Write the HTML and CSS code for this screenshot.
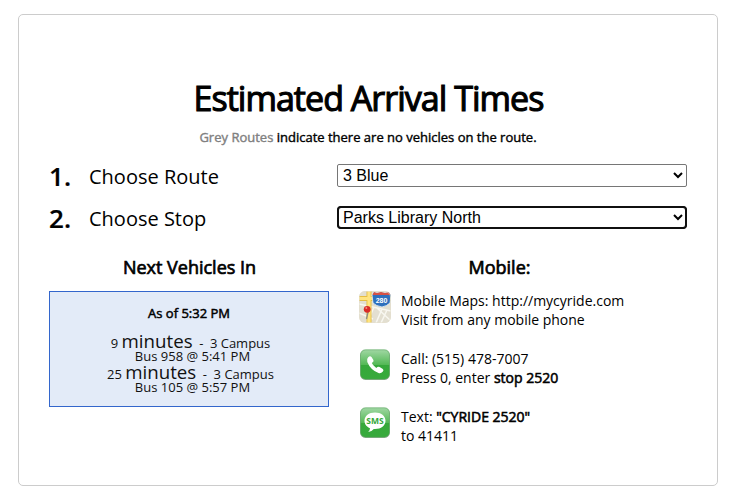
FILE: index.html
```html
<!DOCTYPE html>
<html lang="en">
<head>
<meta charset="utf-8">
<title>Estimated Arrival Times</title>
<link rel="stylesheet" href="styles.css">
</head>
<body>
<main class="card">
  <h1 class="title">Estimated Arrival Times</h1>
  <p class="note"><span class="grey">Grey Routes</span> indicate there are no vehicles on the route.</p>
  <div class="field">
    <span class="num">1.</span>
    <label class="label" for="route">Choose Route</label>
    <select class="select" id="route"><option>3 Blue</option></select>
  </div>
  <div class="field">
    <span class="num">2.</span>
    <label class="label" for="stop">Choose Stop</label>
    <select class="select active" id="stop"><option>Parks Library North</option></select>
  </div>
  <div class="columns">
    <section class="next">
      <h2 class="heading">Next Vehicles In</h2>
      <div class="times">
        <p class="asof">As of 5:32 PM</p>
        <p class="eta">9 <span class="big">minutes</span> <span class="dash">-</span> 3 Campus</p>
        <p class="bus">Bus 958 @ 5:41 PM</p>
        <p class="eta">25 <span class="big">minutes</span> <span class="dash">-</span> 3 Campus</p>
        <p class="bus">Bus 105 @ 5:57 PM</p>
      </div>
    </section>
    <section class="mobile">
      <h2 class="heading">Mobile:</h2>
      <div class="item">
        <svg class="icon" viewBox="0 0 32 32">
          <defs><clipPath id="round"><rect width="32" height="32" rx="6"/></clipPath></defs>
          <g clip-path="url(#round)">
            <rect width="32" height="32" fill="#e3dfd1"/>
            <path d="M0 13L32 20M15 16L8 32M18 17L32 30M0 22L14 28M23 18L17 32M28 19L22 32" stroke="#f8f7f0" stroke-width="1.500" fill="none"/>
            <path d="M0 7.500H32M10 0V32" stroke="#e5bd42" stroke-width="5" fill="none"/>
            <path d="M0 7.500H32M10 0V32" stroke="#ffe480" stroke-width="3.200" fill="none"/>
            <path d="M15 1L18 2 22 1 26 2 30 1 32 4 31 12Q28 15 23 16Q17 15 14 12L13 4Z" fill="#2e70bd" stroke="#e9f1f6" stroke-width=".8"/>
            <path d="M15 1L18 2 22 1 26 2 30 1 31.500 4H13.500Z" fill="#d65145"/>
            <text x="22.500" y="11.500" class="shield">280</text>
            <path d="M9 21L7.500 28" stroke="#8b8b83" stroke-width="1.300"/>
            <circle cx="8.200" cy="18.300" r="3.400" fill="#d92b27"/>
            <circle cx="7.300" cy="17" r="1" fill="#f58b80"/>
          </g>
          <rect x=".5" y=".5" width="31" height="31" rx="5.500" fill="none" stroke="#e4dfcd" stroke-opacity=".6"/>
        </svg>
        <p>Mobile Maps: http://mycyride.com<br>Visit from any mobile phone</p>
      </div>
      <div class="item">
        <svg class="icon" viewBox="0 0 32 32">
          <defs><linearGradient id="green" x1="0" y1="0" x2="0" y2="1"><stop offset="0" stop-color="#a0d7a3"/><stop offset=".5" stop-color="#55b957"/><stop offset=".52" stop-color="#36a83b"/><stop offset="1" stop-color="#37aa3c"/></linearGradient></defs>
          <rect x="1.300" y="1.300" width="29.400" height="29.700" rx="5" fill="#abb1ab"/>
          <rect x="1.500" y=".8" width="29" height="29.400" rx="5" fill="url(#green)" stroke="#56a15b" stroke-width=".6"/>
          <path d="M9.200 8.300Q11 6.500 12.500 8L14.400 11Q15 12.300 13.700 13.300L12.800 14Q13.700 16.300 17.300 19L18.400 18.100Q19.400 17.300 20.600 18L23.800 20Q25.100 21 23.900 22.500Q22 24.700 19.500 24Q11.500 21 8.300 13Q7.400 10 9.200 8.300Z" fill="#fff"/>
        </svg>
        <p>Call: (515) 478-7007<br>Press 0, enter <b>stop 2520</b></p>
      </div>
      <div class="item">
        <svg class="icon" viewBox="0 0 32 32">
          <rect x="1.300" y="1.300" width="29.400" height="29.700" rx="5" fill="#abb1ab"/>
          <rect x="1.500" y=".8" width="29" height="29.400" rx="5" fill="url(#green)" stroke="#56a15b" stroke-width=".6"/>
          <path d="M16 5.500C9.800 5.500 5.500 9 5.500 13.800C5.500 17.600 8 20 11 21.200Q11 23.300 9.200 25Q13 24.500 14.800 22C21.500 22.500 26.500 19 26.500 13.800C26.500 9 22.200 5.500 16 5.500Z" fill="#fff"/>
          <text x="16" y="17" class="sms">SMS</text>
        </svg>
        <p>Text: <b>"CYRIDE 2520"</b><br>to 41411</p>
      </div>
    </section>
  </div>
</main>
</body>
</html>
```
FILE: styles.css
```css
* { box-sizing: border-box; }
body {
  margin: 0;
  padding: 14px 12px 10px 18px;
  background: #fff;
  color: #000;
  font: 14px/19px "Open Sans", sans-serif;
}
p, h1, h2 { margin: 0; }
.card {
  width: 700px;
  height: 472px;
  padding: 59px 30px 0;
  border: 1px solid #ccc;
  border-radius: 5px;
}
.title {
  padding-left: 1px;
  font-size: 34px;
  line-height: 48px;
  font-weight: 400;
  letter-spacing: -.97px;
  text-align: center;
  -webkit-text-stroke: 1.1px;
}
.note {
  margin-top: 6px;
  font-size: 13px;
  line-height: 18px;
  text-align: center;
  -webkit-text-stroke: .4px;
}
.grey { color: #808080; }
.field {
  display: grid;
  grid-template-columns: 40px 248px 350px;
  height: 24px;
  margin-top: 18px;
  align-items: start;
}
.note + .field { margin-top: 17px; }
.num { padding-top: 1px; font-size: 26px; font-weight: 600; line-height: 24px; letter-spacing: .2px; -webkit-text-stroke: .2px; }
.label { padding-top: 2px; font-size: 20px; line-height: 24px; }
.select {
  width: 350px;
  height: 23px;
  margin: 1px 0 0;
  padding: 0 1px;
  background: #fff;
  border: 1px solid #767676;
  border-radius: 2px;
  color: #000;
  font: 16px "Liberation Sans", sans-serif;
}
.active { outline: 2px solid #101010; outline-offset: -2px; border-color: #101010; border-radius: 4px; }
.columns {
  display: grid;
  grid-template-columns: 280px 350px;
  column-gap: 8px;
  margin-top: 26px;
}
.heading {
  margin-bottom: 11px;
  font-size: 18px;
  line-height: 25px;
  font-weight: 400;
  text-align: center;
  -webkit-text-stroke: .7px;
}
.times {
  height: 116px;
  padding-top: 12px;
  border: 1px solid #36c;
  background: #e3ebf8;
  color: #111;
  font-size: 13px;
  line-height: 13px;
  text-align: center;
}
.asof { margin-bottom: 10px; color: #000; line-height: 18px; -webkit-text-stroke: .5px; }
.eta { height: 18px; padding-left: 3px; line-height: 18px; }
.big { font-size: 18.7px; }
.dash { padding: 0 3.2px; }
.bus { height: 13px; padding-left: 7px; }
.mobile .heading { margin-right: 25px; }
.next .heading { padding-left: 1px; }
.item { display: flex; gap: 10px; margin: 0 0 20px 22px; }
.icon { width: 32px; height: 32px; flex: none; }
b { font-weight: 400; -webkit-text-stroke: .55px; }
.shield { fill: #fff; font: bold 7px "Liberation Sans", sans-serif; text-anchor: middle; }
.sms { fill: #35a83a; font: bold 8.5px "Open Sans", sans-serif; text-anchor: middle; }
```
